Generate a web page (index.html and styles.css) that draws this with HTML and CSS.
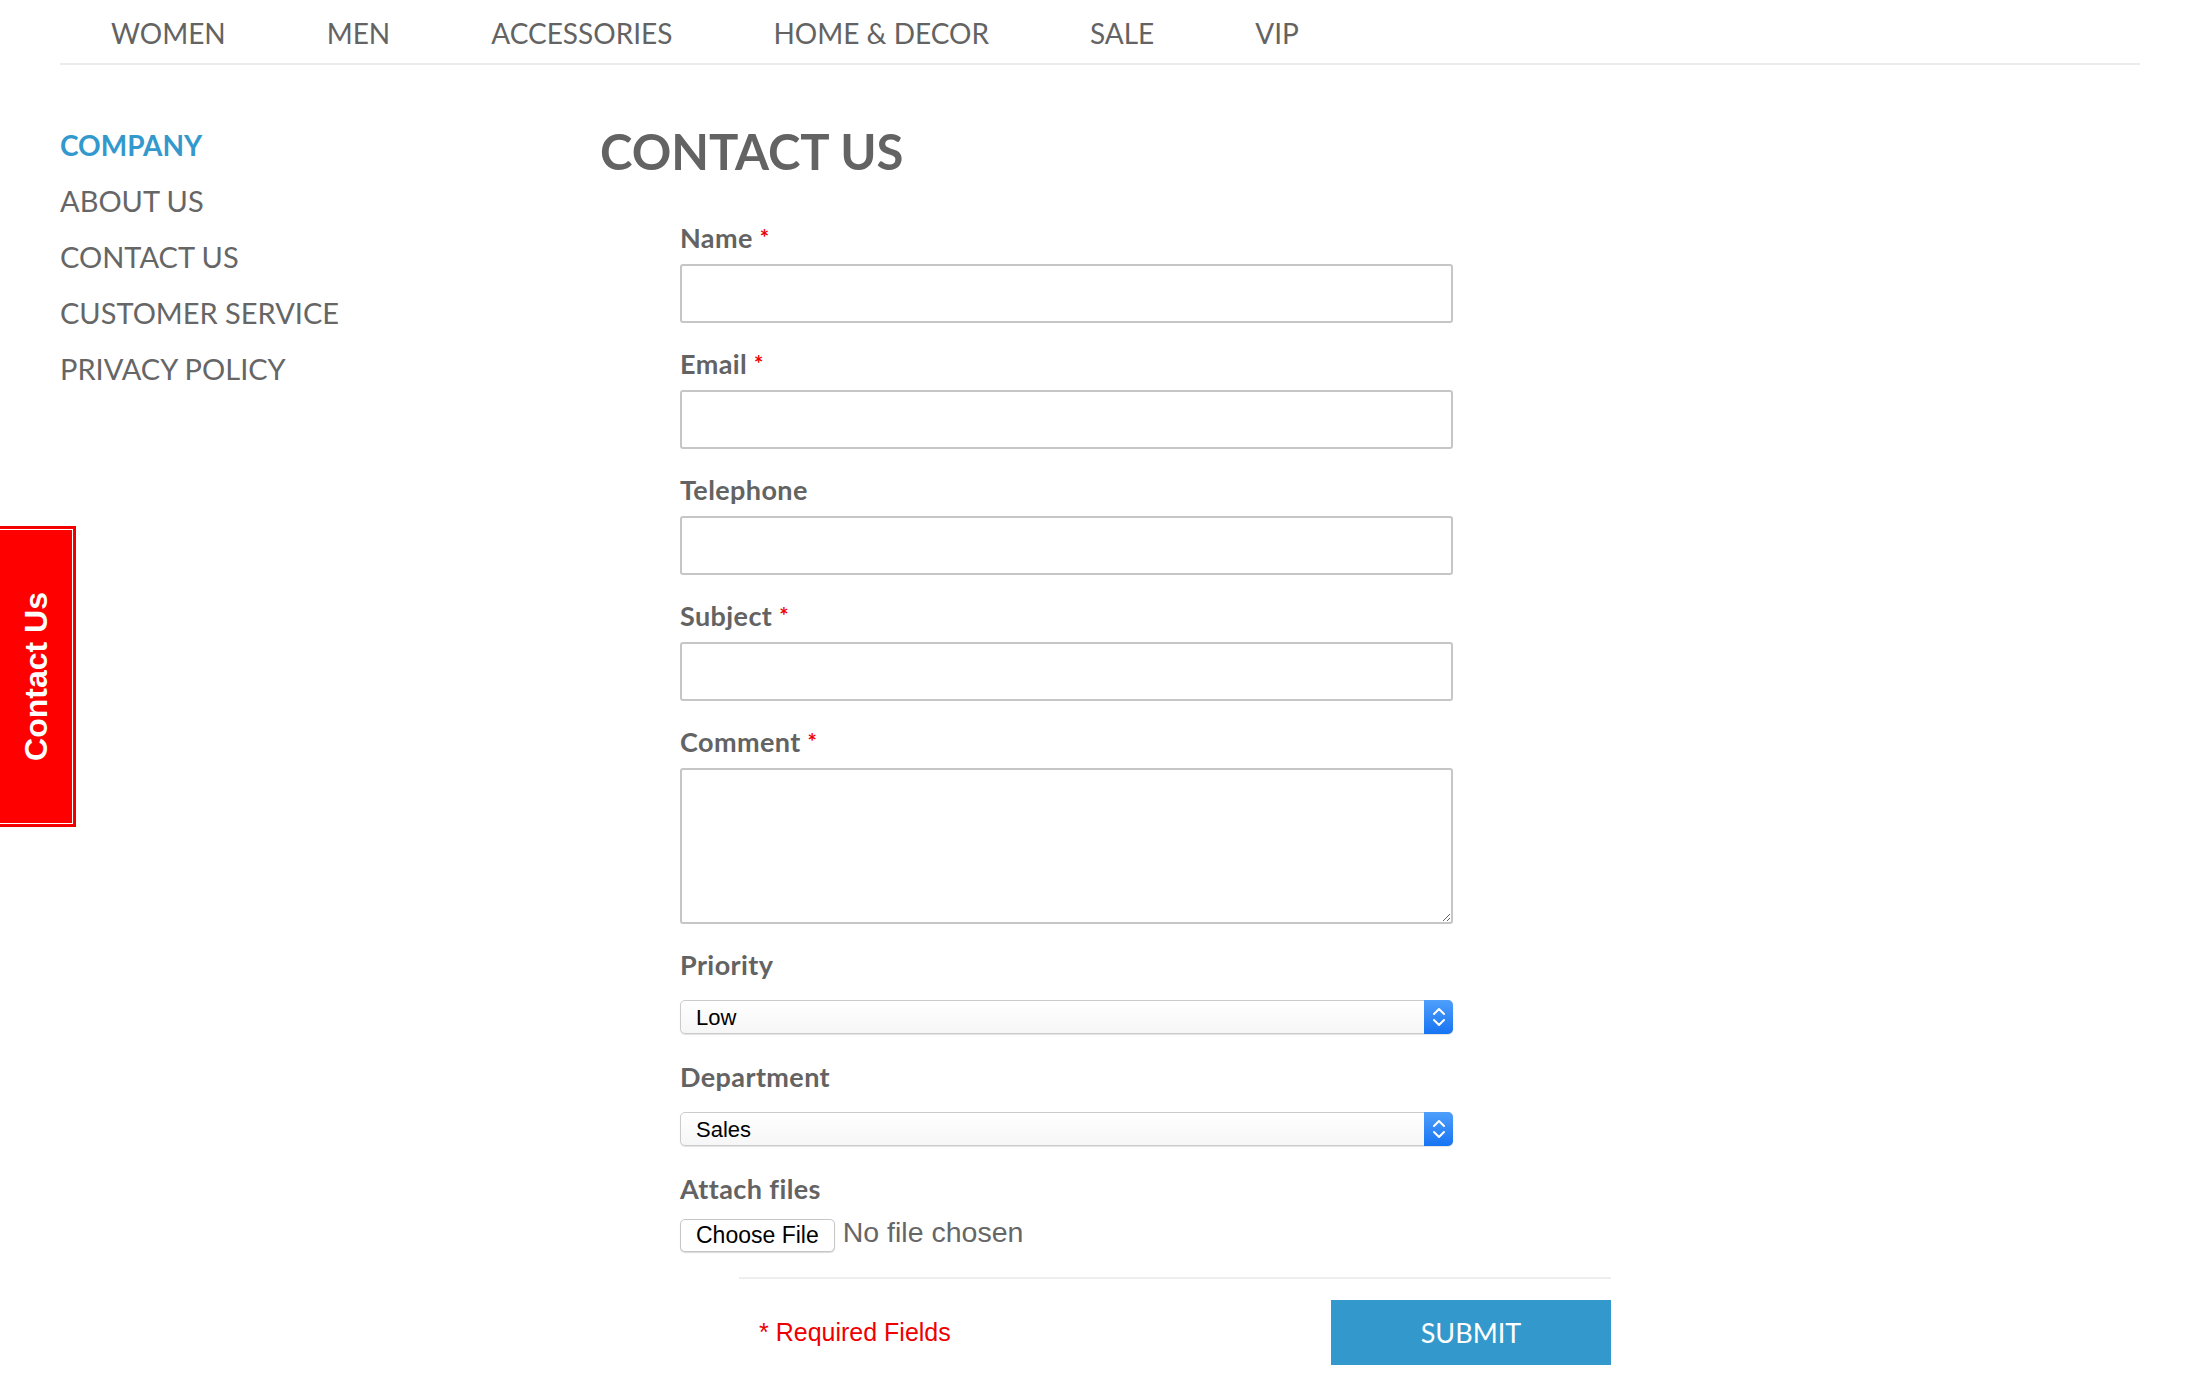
FILE: index.html
```html
<!DOCTYPE html>
<html lang="en">
<head>
  <meta charset="UTF-8">
  <title>Contact Us</title>
  <link rel="stylesheet" href="styles.css">
</head>
<body>
  <header class="top-nav">
    <ul class="menu">
      <li><a href="#">WOMEN</a></li>
      <li><a href="#">MEN</a></li>
      <li><a href="#">ACCESSORIES</a></li>
      <li><a href="#">HOME &amp; DECOR</a></li>
      <li><a href="#">SALE</a></li>
      <li><a href="#">VIP</a></li>
    </ul>
  </header>

  <div class="page">
    <aside class="sidebar">
      <ul>
        <li class="current">COMPANY</li>
        <li><a href="#">ABOUT US</a></li>
        <li><a href="#">CONTACT US</a></li>
        <li><a href="#">CUSTOMER SERVICE</a></li>
        <li><a href="#">PRIVACY POLICY</a></li>
      </ul>
    </aside>

    <main class="content">
      <h1>CONTACT US</h1>

      <form class="contact-form" onsubmit="return false;">
        <div class="field">
          <label for="name">Name <em>*</em></label>
          <input type="text" id="name">
        </div>
        <div class="field">
          <label for="email">Email <em>*</em></label>
          <input type="text" id="email">
        </div>
        <div class="field">
          <label for="telephone">Telephone</label>
          <input type="text" id="telephone">
        </div>
        <div class="field">
          <label for="subject">Subject <em>*</em></label>
          <input type="text" id="subject">
        </div>
        <div class="field">
          <label for="comment">Comment <em>*</em></label>
          <textarea id="comment"></textarea>
        </div>
        <div class="field field-select">
          <label for="priority">Priority</label>
          <div class="select-box">
            <select id="priority">
              <option>Low</option>
              <option>Medium</option>
              <option>High</option>
            </select>
            <span class="stepper">
              <svg width="14" height="22" viewBox="0 0 14 22"><path d="M2 8 L7 3 L12 8 M2 14 L7 19 L12 14" fill="none" stroke="#fff" stroke-width="2" stroke-linecap="round" stroke-linejoin="round"/></svg>
            </span>
          </div>
        </div>
        <div class="field field-select">
          <label for="department">Department</label>
          <div class="select-box">
            <select id="department">
              <option>Sales</option>
              <option>Support</option>
            </select>
            <span class="stepper">
              <svg width="14" height="22" viewBox="0 0 14 22"><path d="M2 8 L7 3 L12 8 M2 14 L7 19 L12 14" fill="none" stroke="#fff" stroke-width="2" stroke-linecap="round" stroke-linejoin="round"/></svg>
            </span>
          </div>
        </div>
        <div class="field field-file">
          <label>Attach files</label>
          <div class="file-row">
            <button type="button" class="file-btn">Choose File</button>
            <span class="file-name">No file chosen</span>
          </div>
        </div>

        <div class="actions">
          <p class="required">* Required Fields</p>
          <button type="submit" class="submit-btn">SUBMIT</button>
        </div>
      </form>
    </main>
  </div>

  <a href="#" class="contact-tab">
    <span class="tab-inner"><span class="tab-label">Contact Us</span></span>
  </a>
</body>
</html>
```

FILE: styles.css
```css
body {
  margin: 0;
  font-family: Lato, "Open Sans", sans-serif;
  color: #636363;
  background: #fff;
}
a {
  color: inherit;
  text-decoration: none;
}
ul {
  list-style: none;
  margin: 0;
  padding: 0;
}

/* top menu */
.top-nav {
  margin: 0 60px;
  height: 63px;
  border-bottom: 2px solid #ececec;
}
.menu {
  display: flex;
  gap: 101px;
  padding-left: 51px;
}
.menu a {
  display: block;
  padding-top: 3px;
  line-height: 60px;
  font-size: 28px;
}

/* page */
.page {
  display: flex;
}
.sidebar {
  width: 540px;
  padding: 52px 0 0 60px;
}
.sidebar li {
  font-size: 29px;
  line-height: 56px;
  color: #666;
}
.sidebar li.current {
  color: #3399cc;
  font-weight: 700;
  font-size: 28px;
}
.content {
  flex: 1;
}
.content h1 {
  margin: 56px 0 0;
  font-size: 49px;
  line-height: 60px;
  font-weight: 700;
  color: #636363;
}

/* form */
.contact-form {
  margin: 42px 0 0 80px;
}
.field {
  width: 773px;
  margin-bottom: 26px;
}
.field label {
  display: block;
  font-size: 27px;
  line-height: 30px;
  height: 30px;
  font-weight: 700;
  letter-spacing: 0.4px;
  margin-bottom: 11px;
}
.field label em {
  font-style: normal;
  color: #e00;
  font-size: 22px;
  line-height: 0;
  vertical-align: 2px;
}
.field input,
.field textarea {
  display: block;
  box-sizing: border-box;
  width: 100%;
  height: 59px;
  border: 2px solid #c6c6c6;
  border-radius: 3px;
  background: #fff;
  font-size: 22px;
  padding: 0 12px;
}
.field textarea {
  height: 156px;
  resize: vertical;
}
.field-select {
  margin-bottom: 28px;
}
.field-select label {
  margin-bottom: 20px;
}
.select-box {
  display: flex;
  height: 34px;
  box-sizing: border-box;
  border: 1px solid #cbcbcb;
  border-radius: 5px;
  background: linear-gradient(#fff, #f6f6f6);
  box-shadow: 0 1px 1px rgba(0, 0, 0, 0.12);
}
.select-box select {
  flex: 1;
  -webkit-appearance: none;
  appearance: none;
  border: none;
  background: transparent;
  padding: 0 0 0 15px;
  font-family: "Liberation Sans", Arial, sans-serif;
  font-size: 22px;
  color: #000;
}
.stepper {
  width: 29px;
  margin: -1px -1px -1px 0;
  display: flex;
  align-items: center;
  justify-content: center;
  border-radius: 0 5px 5px 0;
  background: linear-gradient(#4f9ffb, #1774f2);
}
.field-file label {
  margin-bottom: 15px;
}
.file-row {
  display: flex;
  align-items: center;
}
.file-btn {
  height: 33px;
  padding: 0 15px;
  border: 1px solid #c6c6c6;
  border-radius: 5px;
  background: #fff;
  box-shadow: 0 1px 1px rgba(0, 0, 0, 0.15);
  font-family: "Liberation Sans", Arial, sans-serif;
  font-size: 23px;
  color: #000;
}
.file-name {
  margin: -6px 0 0 8px;
  font-family: "Liberation Sans", Arial, sans-serif;
  font-size: 28.5px;
  color: #666;
}

/* bottom bar */
.actions {
  width: 852px;
  margin: -1px 0 0 59px;
  padding: 21px 0 0 20px;
  border-top: 2px solid #eee;
  display: flex;
  justify-content: space-between;
  align-items: center;
}
.required {
  margin: 0;
  font-family: "Liberation Sans", Arial, sans-serif;
  font-size: 25px;
  color: #e00;
}
.submit-btn {
  width: 280px;
  height: 65px;
  border: none;
  background: #3399cc;
  color: #fff;
  font-family: Lato, sans-serif;
  font-size: 27px;
  cursor: pointer;
}

/* side tab */
.contact-tab {
  position: absolute;
  left: 0;
  top: 526px;
  width: 73px;
  height: 295px;
  padding: 1px 1px 1px 0;
  background: #f00;
  border: 2px solid #e00;
  border-left: none;
}
.tab-inner {
  display: flex;
  align-items: center;
  justify-content: center;
  box-sizing: border-box;
  height: 100%;
  border: 1px solid #fff;
  border-left: none;
}
.tab-label {
  writing-mode: vertical-rl;
  transform: rotate(180deg);
  font-family: "Liberation Sans", Arial, sans-serif;
  font-weight: 700;
  font-size: 32px;
  color: #fff;
}
```
